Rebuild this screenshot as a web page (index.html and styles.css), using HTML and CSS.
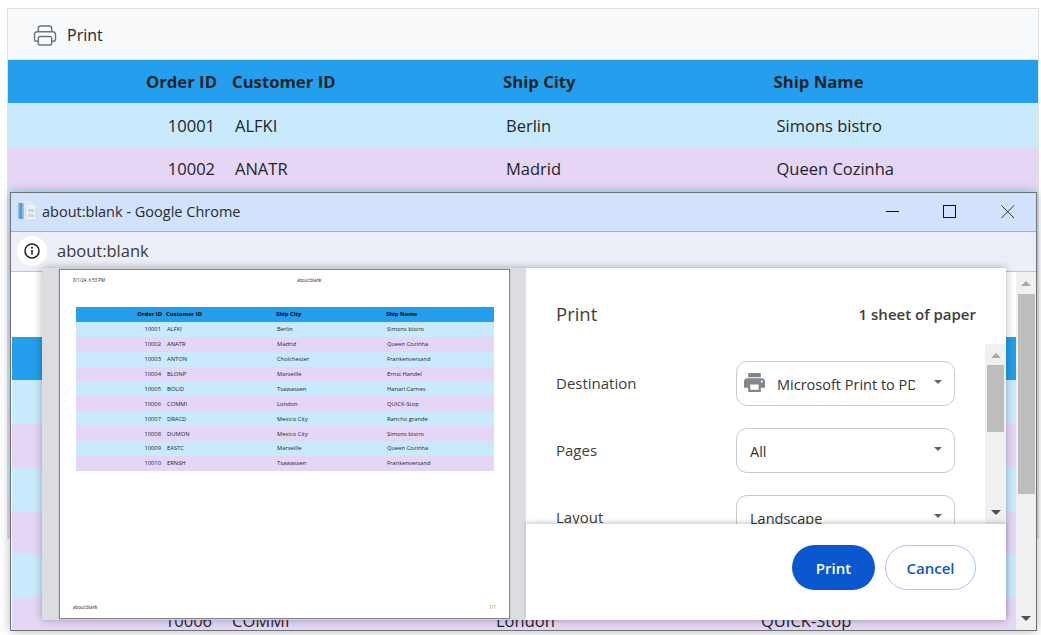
FILE: index.html
```html
<!DOCTYPE html>
<html lang="en">
<head>
    <meta charset="UTF-8">
    <title>Print grid</title>
    <link rel="stylesheet" href="styles.css">
</head>
<body>
<div class="grid">
    <div class="toolbar">
        <svg class="tool-icon" viewBox="0 0 24 22" fill="none" stroke="#6c757d" stroke-width="1.5">
            <path d="M5 7V3.5C5 2 6 1 7.5 1h9C18 1 19 2 19 3.5V7"/>
            <path d="M5 17H3c-1.2 0-2-.8-2-2V10c0-1.7 1.3-3 3-3h16c1.7 0 3 1.3 3 3v5c0 1.2-.8 2-2 2h-2"/>
            <rect x="5" y="12" width="14" height="9" rx="2"/>
        </svg>
        <span>Print</span>
    </div>
    <table class="tbl tbl-main">
        <colgroup><col class="c1"><col class="c2"><col class="c3"><col class="c4"></colgroup>
        <tr class="head"><th class="num">Order ID</th><th>Customer ID</th><th>Ship City</th><th>Ship Name</th></tr>
        <tr><td class="num">10001</td><td>ALFKI</td><td>Berlin</td><td>Simons bistro</td></tr>
        <tr><td class="num">10002</td><td>ANATR</td><td>Madrid</td><td>Queen Cozinha</td></tr>
        <tr><td class="num">10003</td><td>ANTON</td><td>Cholchester</td><td>Frankenversand</td></tr>
        <tr><td class="num">10004</td><td>BLONP</td><td>Marseille</td><td>Ernst Handel</td></tr>
        <tr><td class="num">10005</td><td>BOLID</td><td>Tsawassen</td><td>Hanari Carnes</td></tr>
        <tr><td class="num">10006</td><td>COMMI</td><td>London</td><td>QUICK-Stop</td></tr>
        <tr><td class="num">10007</td><td>DRACD</td><td>Mexico City</td><td>Rancho grande</td></tr>
        <tr><td class="num">10008</td><td>DUMON</td><td>Mexico City</td><td>Simons bistro</td></tr>
        <tr><td class="num">10009</td><td>EASTC</td><td>Marseille</td><td>Queen Cozinha</td></tr>
        <tr><td class="num">10010</td><td>ERNSH</td><td>Tsawassen</td><td>Frankenversand</td></tr>
    </table>
</div>

<div class="window">
    <div class="titlebar">
        <svg class="doc-icon" viewBox="0 0 20 20">
            <rect x="6" y="0" width="10" height="18" fill="#e4e8ee"/>
            <rect x="9" y="3" width="10" height="16" fill="#eef1f5" stroke="#ccd3dc" stroke-width=".6"/>
            <rect x="1" y="2" width="6" height="16" fill="#8fc0e8"/>
            <rect x="2.5" y="2" width="2.5" height="16" fill="#4f9bd8"/>
            <rect x="11" y="8" width="6" height="3" fill="#cfd6de"/>
            <rect x="11" y="13" width="6" height="3" fill="#cfd6de"/>
        </svg>
        <span class="win-title">about:blank - Google Chrome</span>
        <div class="win-btns">
            <svg class="win-btn" viewBox="0 0 14 14"><path d="M0 6.5h13" stroke="#111" fill="none"/></svg>
            <svg class="win-btn" viewBox="0 0 14 14"><rect x=".5" y=".5" width="12" height="12" stroke="#111" fill="none"/></svg>
            <svg class="win-btn" viewBox="0 0 14 14"><path d="M.5.5l12.5 12.5M13 .5L.5 13" stroke="#333" fill="none"/></svg>
        </div>
    </div>
    <div class="addressbar">
        <span class="info">
            <svg viewBox="0 0 16 16" width="16" height="16">
                <circle cx="8" cy="8" r="7" fill="none" stroke="#222" stroke-width="1.5"/>
                <path d="M8 7v4.5" stroke="#222" stroke-width="1.6"/>
                <circle cx="8" cy="4.8" r="1" fill="#222"/>
            </svg>
        </span>
        <span class="url">about:blank</span>
    </div>
    <div class="view">
        <div class="page-area">
            <table class="tbl tbl-page">
                <colgroup><col class="c1"><col class="c2"><col class="c3"><col class="c4"></colgroup>
                <tr class="head"><th class="num">Order ID</th><th>Customer ID</th><th>Ship City</th><th>Ship Name</th></tr>
                <tr><td class="num">10001</td><td>ALFKI</td><td>Berlin</td><td>Simons bistro</td></tr>
                <tr><td class="num">10002</td><td>ANATR</td><td>Madrid</td><td>Queen Cozinha</td></tr>
                <tr><td class="num">10003</td><td>ANTON</td><td>Cholchester</td><td>Frankenversand</td></tr>
                <tr><td class="num">10004</td><td>BLONP</td><td>Marseille</td><td>Ernst Handel</td></tr>
                <tr><td class="num">10005</td><td>BOLID</td><td>Tsawassen</td><td>Hanari Carnes</td></tr>
                <tr><td class="num">10006</td><td>COMMI</td><td>London</td><td>QUICK-Stop</td></tr>
            </table>
        </div>
        <div class="scrollbar sb-page">
            <span class="arrow-up light"></span>
            <span class="thumb"></span>
            <span class="arrow-down"></span>
        </div>
    </div>

    <div class="dialog">
        <div class="preview">
            <div class="sheet">
                <div class="sheet-top"><span>8/1/24, 6:53 PM</span><span class="sheet-mid">about:blank</span></div>
                <table class="tbl tbl-mini">
                    <colgroup><col class="c1"><col class="c2"><col class="c3"><col class="c4"></colgroup>
                    <tr class="head"><th class="num">Order ID</th><th>Customer ID</th><th>Ship City</th><th>Ship Name</th></tr>
                    <tr><td class="num">10001</td><td>ALFKI</td><td>Berlin</td><td>Simons bistro</td></tr>
                    <tr><td class="num">10002</td><td>ANATR</td><td>Madrid</td><td>Queen Cozinha</td></tr>
                    <tr><td class="num">10003</td><td>ANTON</td><td>Cholchester</td><td>Frankenversand</td></tr>
                    <tr><td class="num">10004</td><td>BLONP</td><td>Marseille</td><td>Ernst Handel</td></tr>
                    <tr><td class="num">10005</td><td>BOLID</td><td>Tsawassen</td><td>Hanari Carnes</td></tr>
                    <tr><td class="num">10006</td><td>COMMI</td><td>London</td><td>QUICK-Stop</td></tr>
                    <tr><td class="num">10007</td><td>DRACD</td><td>Mexico City</td><td>Rancho grande</td></tr>
                    <tr><td class="num">10008</td><td>DUMON</td><td>Mexico City</td><td>Simons bistro</td></tr>
                    <tr><td class="num">10009</td><td>EASTC</td><td>Marseille</td><td>Queen Cozinha</td></tr>
                    <tr><td class="num">10010</td><td>ERNSH</td><td>Tsawassen</td><td>Frankenversand</td></tr>
                </table>
                <div class="sheet-bottom"><span>about:blank</span><span class="sheet-no">1/1</span></div>
            </div>
        </div>
        <div class="settings">
            <div class="set-head">
                <span class="set-title">Print</span>
                <span class="set-count">1 sheet of paper</span>
            </div>
            <div class="set-body">
                <div class="set-rows">
                    <div class="set-row">
                        <span class="set-label">Destination</span>
                        <div class="select">
                            <svg class="select-icon" viewBox="2 3 20 18"><path fill="#80868b" d="M19 8H5c-1.66 0-3 1.34-3 3v6h4v4h12v-4h4v-6c0-1.66-1.34-3-3-3zm-3 11H8v-5h8v5zm3-7c-.55 0-1-.45-1-1s.45-1 1-1 1 .45 1 1-.45 1-1 1zm-1-9H6v4h12V3z"/></svg>
                            <span class="select-text">Microsoft Print to PDF</span>
                            <span class="caret"></span>
                        </div>
                    </div>
                    <div class="set-row">
                        <span class="set-label">Pages</span>
                        <div class="select"><span class="select-text">All</span><span class="caret"></span></div>
                    </div>
                    <div class="set-row">
                        <span class="set-label">Layout</span>
                        <div class="select"><span class="select-text">Landscape</span><span class="caret"></span></div>
                    </div>
                </div>
                <div class="scrollbar sb-set">
                    <span class="arrow-up light"></span>
                    <span class="thumb"></span>
                    <span class="arrow-down"></span>
                </div>
            </div>
            <div class="set-foot">
                <a class="btn btn-print">Print</a>
                <a class="btn btn-cancel">Cancel</a>
            </div>
        </div>
    </div>
</div>
</body>
</html>
```

FILE: styles.css
```css
* {
    margin: 0;
    padding: 0;
    box-sizing: border-box;
}

body {
    margin: 8px 2px 0 7px;
    height: 627px;
    overflow: hidden;
    background: #fff;
    font-family: "Open Sans", "Noto Sans", sans-serif;
    color: #212529;
}

.grid {
    border: 1px solid #dee2e6;
    border-bottom: 0;
    width: 1032px;
}

.toolbar {
    display: flex;
    align-items: center;
    gap: 10px;
    height: 51px;
    padding: 2px 0 0 25px;
    background: #f8f9fb;
    font-size: 16px;
    border-bottom: 1px solid #e3e5e8;
}

.tool-icon {
    width: 24px;
    height: 21px;
}

.tbl {
    border-collapse: collapse;
    table-layout: fixed;
    width: 100%;
}

.tbl th,
.tbl td {
    text-align: left;
    white-space: nowrap;
    font-weight: 400;
}

.tbl th {
    font-weight: 700;
}

.tbl tr {
    background: #c9eafd;
}

.tbl tr:nth-child(odd) {
    background: #e5d6f6;
}

.tbl tr.head {
    background: #239fed;
}

.tbl-main,
.tbl-page {
    font-size: 16.5px;
}

.tbl-main .c1 { width: 217px; }
.tbl-main .c2 { width: 271px; }
.tbl-main .c3 { width: 270.5px; }

.tbl-main tr,
.tbl-page tr {
    height: 43.6px;
}

.tbl-main tr.head,
.tbl-page tr.head {
    height: 43px;
}

.tbl-main th,
.tbl-page th {
    padding: 0 7px;
    font-size: 16.7px;
}

.tbl-main th.num,
.tbl-page th.num {
    padding-right: 8px;
}

.tbl-main td,
.tbl-page td {
    padding: 1px 10px 0;
}

.tbl .num {
    text-align: right;
}

.window {
    position: absolute;
    left: 10px;
    top: 192px;
    width: 1027px;
    height: 439px;
    display: flex;
    flex-direction: column;
    background: #fff;
    border: 1px solid #6b7475;
    box-shadow: 0 0 10px rgba(0, 0, 0, .28);
}

.titlebar {
    display: flex;
    align-items: center;
    height: 39px;
    padding: 0 0 2px 6px;
    background: #d2e1fc;
    border-bottom: 1px solid #a9afb8;
    font-size: 14.5px;
    color: #2b2b2b;
}

.doc-icon {
    width: 20px;
    height: 20px;
}

.win-title {
    margin-left: 5px;
}

.win-btns {
    display: flex;
    gap: 43px;
    margin: 2px 21px 0 auto;
}

.win-btn {
    width: 14px;
    height: 14px;
}

.win-btn:last-child {
    margin-left: 1px;
}

.addressbar {
    display: flex;
    align-items: center;
    height: 40px;
    padding: 0 0 2px 6px;
    background: #eceff8;
    border-bottom: 1px solid #c0c3c8;
    font-size: 16.5px;
    color: #3a3a3a;
}

.info {
    display: flex;
    align-items: center;
    justify-content: center;
    width: 30px;
    height: 30px;
    border-radius: 50%;
    background: #fff;
}

.url {
    margin-left: 10px;
}

.view {
    display: flex;
    flex: 1;
    min-height: 0;
}

.page-area {
    flex: 1;
    overflow: hidden;
    padding: 65px 0 0 1px;
}

.tbl-page .c1 { width: 210px; }
.tbl-page .c2 { width: 264px; }
.tbl-page .c3 { width: 265px; }

.scrollbar {
    display: flex;
    flex-direction: column;
    align-items: center;
    justify-content: space-between;
    background: #f0f0f0;
}

.thumb {
    background: #bdbdbd;
}

.arrow-up,
.arrow-down {
    width: 0;
    height: 0;
    border-left: 5px solid transparent;
    border-right: 5px solid transparent;
}

.arrow-up {
    border-bottom: 5px solid #505050;
}

.arrow-up.light {
    border-bottom-color: #a8a8a8;
}

.arrow-down {
    border-top: 5px solid #505050;
}

.sb-page {
    width: 20px;
    padding: 9px 0;
}

.sb-page .thumb {
    width: 17px;
    height: 200px;
    margin: 8px 0 122px;
}

.sb-set {
    width: 21px;
    padding: 9px 0;
}

.sb-set .thumb {
    width: 17px;
    height: 67px;
    margin: 7px 0 78px;
}

.dialog {
    position: absolute;
    left: 31px;
    top: 75px;
    width: 964px;
    height: 352px;
    display: flex;
    background: #fff;
    box-shadow: 0 0 8px rgba(0, 0, 0, .3);
}

.preview {
    display: flex;
    width: 484px;
    padding: 2px 17px 2px 18px;
    background: #dcdde1;
}

.sheet {
    display: flex;
    flex: 1;
    flex-direction: column;
    padding: 7px 13px 8px;
    background: #fff;
    box-shadow: 0 0 1px 1px #85878a;
    font-size: 4.4px;
    color: #222;
}

.sheet-top {
    display: flex;
    height: 30px;
}

.sheet-mid {
    margin-left: 192px;
}

.tbl-mini {
    width: 418px;
    margin-left: 3px;
    font-size: 5.8px;
    color: #24242e;
}

.tbl-mini .c1 { width: 88px; }
.tbl-mini .c2 { width: 110px; }
.tbl-mini .c3 { width: 110px; }

.tbl-mini tr {
    height: 14.9px;
}

.tbl-mini th {
    padding: 0 2px;
    color: #000;
}

.tbl-mini td {
    padding: 0 3px;
}

.sheet-bottom {
    display: flex;
    justify-content: space-between;
    margin-top: auto;
}

.sheet-no {
    color: #a8780a;
}

.settings {
    display: flex;
    flex: 1;
    flex-direction: column;
    min-width: 0;
}

.set-head {
    display: flex;
    align-items: center;
    justify-content: space-between;
    height: 76px;
    padding: 15px 30px 0;
}

.set-title {
    font-size: 18.5px;
    color: #3c3c3c;
}

.set-count {
    font-size: 15px;
    font-weight: 600;
    color: #3c3c3c;
    padding-top: 1px;
}

.set-body {
    display: flex;
    flex: 1;
    min-height: 0;
}

.set-rows {
    display: flex;
    flex: 1;
    flex-direction: column;
    gap: 22px;
    overflow: hidden;
    padding: 17px 30px 0;
}

.set-row {
    display: flex;
    flex-shrink: 0;
    align-items: center;
    height: 45px;
}

.set-label {
    width: 180px;
    padding-bottom: 2px;
    font-size: 15px;
    color: #3c3c3c;
}

.select {
    display: flex;
    align-items: center;
    width: 219px;
    height: 45px;
    padding: 0 12px 0 13px;
    border: 1px solid #c8cacd;
    border-radius: 11px;
    font-size: 14.5px;
    color: #333;
}

.select-icon {
    flex-shrink: 0;
    width: 21px;
    height: 19px;
    margin: -3px 12px 0 -6px;
}

.select-text {
    width: 138px;
    padding-top: 2px;
    overflow: hidden;
    white-space: nowrap;
}

.caret {
    width: 0;
    height: 0;
    margin-left: auto;
    margin-top: -3px;
    border-left: 4.5px solid transparent;
    border-right: 4.5px solid transparent;
    border-top: 4.5px solid #5f6368;
}

.set-foot {
    display: flex;
    justify-content: flex-end;
    gap: 10px;
    height: 96px;
    padding: 21px 30px 0 0;
    background: #fff;
    box-shadow: 0 -2px 4px rgba(0, 0, 0, .18);
    position: relative;
}

.btn {
    display: flex;
    align-items: center;
    justify-content: center;
    height: 45px;
    border-radius: 23px;
    font-size: 15px;
    font-weight: 600;
}

.btn-print {
    width: 83px;
    background: #0b57d0;
    color: #fff;
}

.btn-cancel {
    width: 91px;
    border: 1px solid #a8c7fa;
    color: #0b57d0;
}
```
